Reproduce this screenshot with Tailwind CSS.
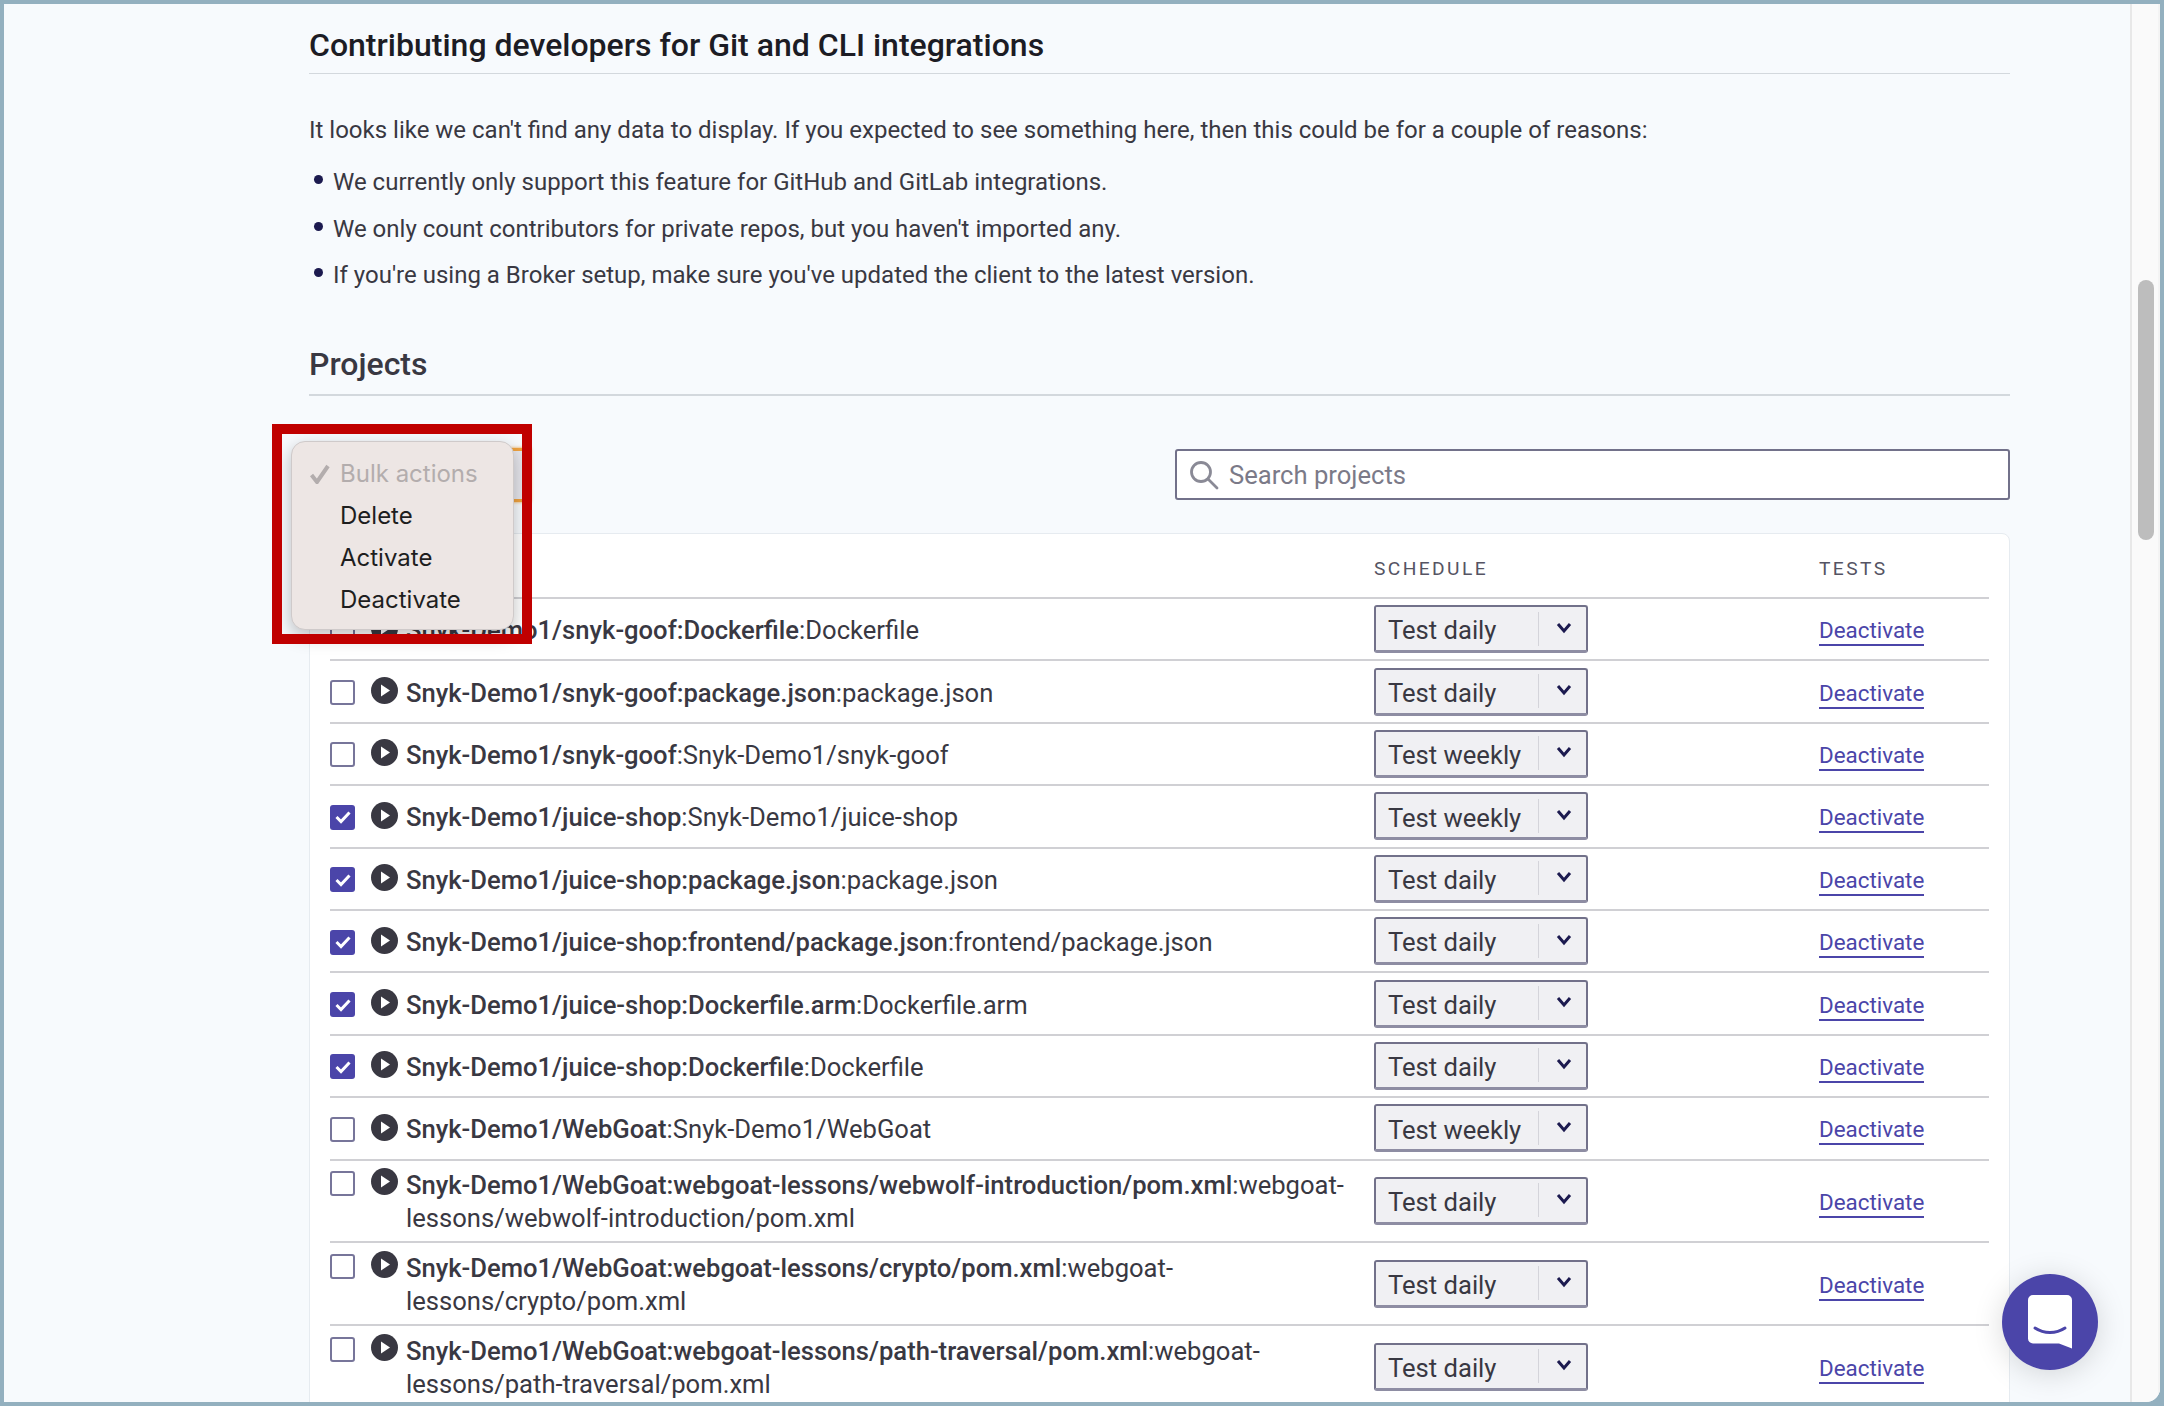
<!DOCTYPE html>
<html><head><meta charset="utf-8"><script src="https://cdn.jsdelivr.net/npm/@tailwindcss/browser@4"></script></head>
<body class="m-0 h-[1406px] w-[2164px] overflow-hidden bg-[#93b0bf] p-[4px] font-['Roboto',sans-serif] text-[25.6px] text-[#393842]">
<div class="flex h-[1398px] w-[2156px] overflow-hidden rounded-br-[14px] bg-[#f7fafd]">
<main class="relative h-full w-[2126px] shrink-0 overflow-hidden pl-[305px] pr-[120px]">
  <h2 class="border-b border-[#d3d8dd] pt-[24px] pb-[11px] text-[32px] leading-[34px] font-medium text-[#1c1c24]">Contributing developers for Git and CLI integrations</h2>
  <p class="mt-[40px] text-[24px] leading-[33px]">It looks like we can't find any data to display. If you expected to see something here, then this could be for a couple of reasons:</p>
  <ul class="mt-[19px] flex flex-col gap-[13.5px] text-[24px] leading-[33px]">
    <li class="flex"><span class="mt-[9px] ml-[5px] mr-[10px] h-[9px] w-[9px] rounded-full bg-[#1c1a4f]"></span>We currently only support this feature for GitHub and GitLab integrations.</li>
    <li class="flex"><span class="mt-[9px] ml-[5px] mr-[10px] h-[9px] w-[9px] rounded-full bg-[#1c1a4f]"></span>We only count contributors for private repos, but you haven't imported any.</li>
    <li class="flex"><span class="mt-[9px] ml-[5px] mr-[10px] h-[9px] w-[9px] rounded-full bg-[#1c1a4f]"></span>If you're using a Broker setup, make sure you've updated the client to the latest version.</li>
  </ul>
  <h2 class="mt-[55px] border-b-2 border-[#d3d8dd] pb-[13px] text-[32px] leading-[34px] font-medium text-[#393842]">Projects</h2>
  <div class="mt-[53px] flex h-[51px] items-center justify-between">
    <div class="h-[54px] w-[222px] border-y-[3px] border-[#f0a340] bg-[#e6e6ec] shadow-[0_0_3px_#f0a340]"></div>
    <div class="flex h-[51px] w-[835px] items-center gap-[10px] rounded-[3px] border-2 border-[#72718a] bg-white pl-[12px]">
      <svg class="h-[30px] w-[30px]" viewBox="0 0 30 30" fill="none" stroke="#8a8a96" stroke-width="2.800"><circle cx="12" cy="12" r="9.500"/><path d="M19 19l9 9" stroke-linecap="round"/></svg>
      <span class="pt-[2px] text-[#7b7a88]">Search projects</span>
    </div>
  </div>
  <section class="mt-[33px] rounded-t-[8px] border border-[#e6ebf0] bg-white pl-[20px] pr-[20px]">
    <div class="grid h-[65px] grid-cols-[41px_35px_968px_445px_170px] items-center border-b-2 border-[#d0d0d4] pt-[7px] text-[19.2px] tracking-[2.4px] text-[#555463]">
      <span></span><span></span><span></span><span>SCHEDULE</span><span>TESTS</span>
    </div>

    <div class="grid h-[62.4px] grid-cols-[41px_35px_968px_445px_170px] items-center border-b-2 border-[#d0d0d4]">
      <span class="h-[25px] w-[25px] translate-y-[1px] rounded-[3px] border-2 border-[#77759a] bg-white"></span>
      <svg class="h-[27px] w-[27px] -translate-y-[1px]" viewBox="0 0 27 27"><circle cx="13.500" cy="13.500" r="13.500" fill="#393842"/><path d="M10 7.500l9 6-9 6z" fill="#fff"/></svg>
      <span class="pr-[20px] pt-[3px] leading-[33px]"><b class="font-medium">Snyk-Demo1/snyk-goof:Dockerfile</b>:Dockerfile</span>
      <div class="flex h-[48px] w-[214px] items-center justify-between rounded-[3px] border-2 border-b-[3px] border-[#72718a] border-b-[#8e8da3] bg-[#f0f0f3]"><span class="pl-[12px] pt-[4px]">Test daily</span><span class="flex h-[34px] w-[48px] items-center justify-center border-l border-[#d4d4da] pb-[2px] pl-[2px]"><svg class="h-[12px] w-[16px]" viewBox="0 0 16 12" fill="none" stroke="#1c1a4f" stroke-width="3"><path d="M2 2l6 7 6-7"/></svg></span></div>
      <a class="mt-[5px] w-fit border-b-2 border-[#4b45a9] text-[22.4px] leading-[27px] text-[#4b45a9]">Deactivate</a>
    </div>

    <div class="grid h-[62.4px] grid-cols-[41px_35px_968px_445px_170px] items-center border-b-2 border-[#d0d0d4]">
      <span class="h-[25px] w-[25px] translate-y-[1px] rounded-[3px] border-2 border-[#77759a] bg-white"></span>
      <svg class="h-[27px] w-[27px] -translate-y-[1px]" viewBox="0 0 27 27"><circle cx="13.500" cy="13.500" r="13.500" fill="#393842"/><path d="M10 7.500l9 6-9 6z" fill="#fff"/></svg>
      <span class="pr-[20px] pt-[3px] leading-[33px]"><b class="font-medium">Snyk-Demo1/snyk-goof:package.json</b>:package.json</span>
      <div class="flex h-[48px] w-[214px] items-center justify-between rounded-[3px] border-2 border-b-[3px] border-[#72718a] border-b-[#8e8da3] bg-[#f0f0f3]"><span class="pl-[12px] pt-[4px]">Test daily</span><span class="flex h-[34px] w-[48px] items-center justify-center border-l border-[#d4d4da] pb-[2px] pl-[2px]"><svg class="h-[12px] w-[16px]" viewBox="0 0 16 12" fill="none" stroke="#1c1a4f" stroke-width="3"><path d="M2 2l6 7 6-7"/></svg></span></div>
      <a class="mt-[5px] w-fit border-b-2 border-[#4b45a9] text-[22.4px] leading-[27px] text-[#4b45a9]">Deactivate</a>
    </div>

    <div class="grid h-[62.4px] grid-cols-[41px_35px_968px_445px_170px] items-center border-b-2 border-[#d0d0d4]">
      <span class="h-[25px] w-[25px] translate-y-[1px] rounded-[3px] border-2 border-[#77759a] bg-white"></span>
      <svg class="h-[27px] w-[27px] -translate-y-[1px]" viewBox="0 0 27 27"><circle cx="13.500" cy="13.500" r="13.500" fill="#393842"/><path d="M10 7.500l9 6-9 6z" fill="#fff"/></svg>
      <span class="pr-[20px] pt-[3px] leading-[33px]"><b class="font-medium">Snyk-Demo1/snyk-goof</b>:Snyk-Demo1/snyk-goof</span>
      <div class="flex h-[48px] w-[214px] items-center justify-between rounded-[3px] border-2 border-b-[3px] border-[#72718a] border-b-[#8e8da3] bg-[#f0f0f3]"><span class="pl-[12px] pt-[4px]">Test weekly</span><span class="flex h-[34px] w-[48px] items-center justify-center border-l border-[#d4d4da] pb-[2px] pl-[2px]"><svg class="h-[12px] w-[16px]" viewBox="0 0 16 12" fill="none" stroke="#1c1a4f" stroke-width="3"><path d="M2 2l6 7 6-7"/></svg></span></div>
      <a class="mt-[5px] w-fit border-b-2 border-[#4b45a9] text-[22.4px] leading-[27px] text-[#4b45a9]">Deactivate</a>
    </div>

    <div class="grid h-[62.4px] grid-cols-[41px_35px_968px_445px_170px] items-center border-b-2 border-[#d0d0d4]">
      <span class="flex h-[25px] w-[25px] translate-y-[1px] items-center justify-center rounded-[3px] bg-[#4b45a9]"><svg class="h-[14px] w-[16px]" viewBox="0 0 16 14" fill="none" stroke="#fff" stroke-width="3"><path d="M1.500 7l4.500 4.500 8.500-9"/></svg></span>
      <svg class="h-[27px] w-[27px] -translate-y-[1px]" viewBox="0 0 27 27"><circle cx="13.500" cy="13.500" r="13.500" fill="#393842"/><path d="M10 7.500l9 6-9 6z" fill="#fff"/></svg>
      <span class="pr-[20px] pt-[3px] leading-[33px]"><b class="font-medium">Snyk-Demo1/juice-shop</b>:Snyk-Demo1/juice-shop</span>
      <div class="flex h-[48px] w-[214px] items-center justify-between rounded-[3px] border-2 border-b-[3px] border-[#72718a] border-b-[#8e8da3] bg-[#f0f0f3]"><span class="pl-[12px] pt-[4px]">Test weekly</span><span class="flex h-[34px] w-[48px] items-center justify-center border-l border-[#d4d4da] pb-[2px] pl-[2px]"><svg class="h-[12px] w-[16px]" viewBox="0 0 16 12" fill="none" stroke="#1c1a4f" stroke-width="3"><path d="M2 2l6 7 6-7"/></svg></span></div>
      <a class="mt-[5px] w-fit border-b-2 border-[#4b45a9] text-[22.4px] leading-[27px] text-[#4b45a9]">Deactivate</a>
    </div>

    <div class="grid h-[62.4px] grid-cols-[41px_35px_968px_445px_170px] items-center border-b-2 border-[#d0d0d4]">
      <span class="flex h-[25px] w-[25px] translate-y-[1px] items-center justify-center rounded-[3px] bg-[#4b45a9]"><svg class="h-[14px] w-[16px]" viewBox="0 0 16 14" fill="none" stroke="#fff" stroke-width="3"><path d="M1.500 7l4.500 4.500 8.500-9"/></svg></span>
      <svg class="h-[27px] w-[27px] -translate-y-[1px]" viewBox="0 0 27 27"><circle cx="13.500" cy="13.500" r="13.500" fill="#393842"/><path d="M10 7.500l9 6-9 6z" fill="#fff"/></svg>
      <span class="pr-[20px] pt-[3px] leading-[33px]"><b class="font-medium">Snyk-Demo1/juice-shop:package.json</b>:package.json</span>
      <div class="flex h-[48px] w-[214px] items-center justify-between rounded-[3px] border-2 border-b-[3px] border-[#72718a] border-b-[#8e8da3] bg-[#f0f0f3]"><span class="pl-[12px] pt-[4px]">Test daily</span><span class="flex h-[34px] w-[48px] items-center justify-center border-l border-[#d4d4da] pb-[2px] pl-[2px]"><svg class="h-[12px] w-[16px]" viewBox="0 0 16 12" fill="none" stroke="#1c1a4f" stroke-width="3"><path d="M2 2l6 7 6-7"/></svg></span></div>
      <a class="mt-[5px] w-fit border-b-2 border-[#4b45a9] text-[22.4px] leading-[27px] text-[#4b45a9]">Deactivate</a>
    </div>

    <div class="grid h-[62.4px] grid-cols-[41px_35px_968px_445px_170px] items-center border-b-2 border-[#d0d0d4]">
      <span class="flex h-[25px] w-[25px] translate-y-[1px] items-center justify-center rounded-[3px] bg-[#4b45a9]"><svg class="h-[14px] w-[16px]" viewBox="0 0 16 14" fill="none" stroke="#fff" stroke-width="3"><path d="M1.500 7l4.500 4.500 8.500-9"/></svg></span>
      <svg class="h-[27px] w-[27px] -translate-y-[1px]" viewBox="0 0 27 27"><circle cx="13.500" cy="13.500" r="13.500" fill="#393842"/><path d="M10 7.500l9 6-9 6z" fill="#fff"/></svg>
      <span class="pr-[20px] pt-[3px] leading-[33px]"><b class="font-medium">Snyk-Demo1/juice-shop:frontend/package.json</b>:frontend/package.json</span>
      <div class="flex h-[48px] w-[214px] items-center justify-between rounded-[3px] border-2 border-b-[3px] border-[#72718a] border-b-[#8e8da3] bg-[#f0f0f3]"><span class="pl-[12px] pt-[4px]">Test daily</span><span class="flex h-[34px] w-[48px] items-center justify-center border-l border-[#d4d4da] pb-[2px] pl-[2px]"><svg class="h-[12px] w-[16px]" viewBox="0 0 16 12" fill="none" stroke="#1c1a4f" stroke-width="3"><path d="M2 2l6 7 6-7"/></svg></span></div>
      <a class="mt-[5px] w-fit border-b-2 border-[#4b45a9] text-[22.4px] leading-[27px] text-[#4b45a9]">Deactivate</a>
    </div>

    <div class="grid h-[62.4px] grid-cols-[41px_35px_968px_445px_170px] items-center border-b-2 border-[#d0d0d4]">
      <span class="flex h-[25px] w-[25px] translate-y-[1px] items-center justify-center rounded-[3px] bg-[#4b45a9]"><svg class="h-[14px] w-[16px]" viewBox="0 0 16 14" fill="none" stroke="#fff" stroke-width="3"><path d="M1.500 7l4.500 4.500 8.500-9"/></svg></span>
      <svg class="h-[27px] w-[27px] -translate-y-[1px]" viewBox="0 0 27 27"><circle cx="13.500" cy="13.500" r="13.500" fill="#393842"/><path d="M10 7.500l9 6-9 6z" fill="#fff"/></svg>
      <span class="pr-[20px] pt-[3px] leading-[33px]"><b class="font-medium">Snyk-Demo1/juice-shop:Dockerfile.arm</b>:Dockerfile.arm</span>
      <div class="flex h-[48px] w-[214px] items-center justify-between rounded-[3px] border-2 border-b-[3px] border-[#72718a] border-b-[#8e8da3] bg-[#f0f0f3]"><span class="pl-[12px] pt-[4px]">Test daily</span><span class="flex h-[34px] w-[48px] items-center justify-center border-l border-[#d4d4da] pb-[2px] pl-[2px]"><svg class="h-[12px] w-[16px]" viewBox="0 0 16 12" fill="none" stroke="#1c1a4f" stroke-width="3"><path d="M2 2l6 7 6-7"/></svg></span></div>
      <a class="mt-[5px] w-fit border-b-2 border-[#4b45a9] text-[22.4px] leading-[27px] text-[#4b45a9]">Deactivate</a>
    </div>

    <div class="grid h-[62.4px] grid-cols-[41px_35px_968px_445px_170px] items-center border-b-2 border-[#d0d0d4]">
      <span class="flex h-[25px] w-[25px] translate-y-[1px] items-center justify-center rounded-[3px] bg-[#4b45a9]"><svg class="h-[14px] w-[16px]" viewBox="0 0 16 14" fill="none" stroke="#fff" stroke-width="3"><path d="M1.500 7l4.500 4.500 8.500-9"/></svg></span>
      <svg class="h-[27px] w-[27px] -translate-y-[1px]" viewBox="0 0 27 27"><circle cx="13.500" cy="13.500" r="13.500" fill="#393842"/><path d="M10 7.500l9 6-9 6z" fill="#fff"/></svg>
      <span class="pr-[20px] pt-[3px] leading-[33px]"><b class="font-medium">Snyk-Demo1/juice-shop:Dockerfile</b>:Dockerfile</span>
      <div class="flex h-[48px] w-[214px] items-center justify-between rounded-[3px] border-2 border-b-[3px] border-[#72718a] border-b-[#8e8da3] bg-[#f0f0f3]"><span class="pl-[12px] pt-[4px]">Test daily</span><span class="flex h-[34px] w-[48px] items-center justify-center border-l border-[#d4d4da] pb-[2px] pl-[2px]"><svg class="h-[12px] w-[16px]" viewBox="0 0 16 12" fill="none" stroke="#1c1a4f" stroke-width="3"><path d="M2 2l6 7 6-7"/></svg></span></div>
      <a class="mt-[5px] w-fit border-b-2 border-[#4b45a9] text-[22.4px] leading-[27px] text-[#4b45a9]">Deactivate</a>
    </div>

    <div class="grid h-[62.4px] grid-cols-[41px_35px_968px_445px_170px] items-center border-b-2 border-[#d0d0d4]">
      <span class="h-[25px] w-[25px] translate-y-[1px] rounded-[3px] border-2 border-[#77759a] bg-white"></span>
      <svg class="h-[27px] w-[27px] -translate-y-[1px]" viewBox="0 0 27 27"><circle cx="13.500" cy="13.500" r="13.500" fill="#393842"/><path d="M10 7.500l9 6-9 6z" fill="#fff"/></svg>
      <span class="pr-[20px] pt-[3px] leading-[33px]"><b class="font-medium">Snyk-Demo1/WebGoat</b>:Snyk-Demo1/WebGoat</span>
      <div class="flex h-[48px] w-[214px] items-center justify-between rounded-[3px] border-2 border-b-[3px] border-[#72718a] border-b-[#8e8da3] bg-[#f0f0f3]"><span class="pl-[12px] pt-[4px]">Test weekly</span><span class="flex h-[34px] w-[48px] items-center justify-center border-l border-[#d4d4da] pb-[2px] pl-[2px]"><svg class="h-[12px] w-[16px]" viewBox="0 0 16 12" fill="none" stroke="#1c1a4f" stroke-width="3"><path d="M2 2l6 7 6-7"/></svg></span></div>
      <a class="mt-[5px] w-fit border-b-2 border-[#4b45a9] text-[22.4px] leading-[27px] text-[#4b45a9]">Deactivate</a>
    </div>

    <div class="grid h-[82.8px] grid-cols-[41px_35px_968px_445px_170px] items-center border-b-2 border-[#d0d0d4]">
      <span class="-mt-[34px] h-[25px] w-[25px] rounded-[3px] border-2 border-[#77759a] bg-white"></span>
      <svg class="-mt-[38px] h-[27px] w-[27px]" viewBox="0 0 27 27"><circle cx="13.500" cy="13.500" r="13.500" fill="#393842"/><path d="M10 7.500l9 6-9 6z" fill="#fff"/></svg>
      <span class="pr-[20px] pt-[2px] leading-[33px]"><b class="font-medium">Snyk-Demo1/WebGoat:webgoat-lessons/webwolf-introduction/pom.xml</b>:webgoat-lessons/webwolf-introduction/pom.xml</span>
      <div class="flex h-[48px] w-[214px] items-center justify-between rounded-[3px] border-2 border-b-[3px] border-[#72718a] border-b-[#8e8da3] bg-[#f0f0f3]"><span class="pl-[12px] pt-[4px]">Test daily</span><span class="flex h-[34px] w-[48px] items-center justify-center border-l border-[#d4d4da] pb-[2px] pl-[2px]"><svg class="h-[12px] w-[16px]" viewBox="0 0 16 12" fill="none" stroke="#1c1a4f" stroke-width="3"><path d="M2 2l6 7 6-7"/></svg></span></div>
      <a class="mt-[5px] w-fit border-b-2 border-[#4b45a9] text-[22.4px] leading-[27px] text-[#4b45a9]">Deactivate</a>
    </div>

    <div class="grid h-[82.8px] grid-cols-[41px_35px_968px_445px_170px] items-center border-b-2 border-[#d0d0d4]">
      <span class="-mt-[34px] h-[25px] w-[25px] rounded-[3px] border-2 border-[#77759a] bg-white"></span>
      <svg class="-mt-[38px] h-[27px] w-[27px]" viewBox="0 0 27 27"><circle cx="13.500" cy="13.500" r="13.500" fill="#393842"/><path d="M10 7.500l9 6-9 6z" fill="#fff"/></svg>
      <span class="pr-[20px] pt-[2px] leading-[33px]"><b class="font-medium">Snyk-Demo1/WebGoat:webgoat-lessons/crypto/pom.xml</b>:webgoat-lessons/crypto/pom.xml</span>
      <div class="flex h-[48px] w-[214px] items-center justify-between rounded-[3px] border-2 border-b-[3px] border-[#72718a] border-b-[#8e8da3] bg-[#f0f0f3]"><span class="pl-[12px] pt-[4px]">Test daily</span><span class="flex h-[34px] w-[48px] items-center justify-center border-l border-[#d4d4da] pb-[2px] pl-[2px]"><svg class="h-[12px] w-[16px]" viewBox="0 0 16 12" fill="none" stroke="#1c1a4f" stroke-width="3"><path d="M2 2l6 7 6-7"/></svg></span></div>
      <a class="mt-[5px] w-fit border-b-2 border-[#4b45a9] text-[22.4px] leading-[27px] text-[#4b45a9]">Deactivate</a>
    </div>

    <div class="grid h-[82.8px] grid-cols-[41px_35px_968px_445px_170px] items-center border-b-2 border-[#d0d0d4]">
      <span class="-mt-[34px] h-[25px] w-[25px] rounded-[3px] border-2 border-[#77759a] bg-white"></span>
      <svg class="-mt-[38px] h-[27px] w-[27px]" viewBox="0 0 27 27"><circle cx="13.500" cy="13.500" r="13.500" fill="#393842"/><path d="M10 7.500l9 6-9 6z" fill="#fff"/></svg>
      <span class="pr-[20px] pt-[2px] leading-[33px]"><b class="font-medium">Snyk-Demo1/WebGoat:webgoat-lessons/path-traversal/pom.xml</b>:webgoat-lessons/path-traversal/pom.xml</span>
      <div class="flex h-[48px] w-[214px] items-center justify-between rounded-[3px] border-2 border-b-[3px] border-[#72718a] border-b-[#8e8da3] bg-[#f0f0f3]"><span class="pl-[12px] pt-[4px]">Test daily</span><span class="flex h-[34px] w-[48px] items-center justify-center border-l border-[#d4d4da] pb-[2px] pl-[2px]"><svg class="h-[12px] w-[16px]" viewBox="0 0 16 12" fill="none" stroke="#1c1a4f" stroke-width="3"><path d="M2 2l6 7 6-7"/></svg></span></div>
      <a class="mt-[5px] w-fit border-b-2 border-[#4b45a9] text-[22.4px] leading-[27px] text-[#4b45a9]">Deactivate</a>
    </div>
  </section>

  <div class="absolute left-[287px] top-[437px] flex h-[189px] w-[223px] flex-col rounded-[14px] border border-[#cfcaca] bg-[#ede6e4] pt-[11px] font-['Inter',sans-serif] text-[24px] leading-[42px] text-[#1e1e1e] shadow-[0_6px_18px_rgba(0,0,0,0.25)]">
    <div class="flex items-center text-[#b3adad]"><svg class="ml-[18px] mr-[9px] h-[20px] w-[21px]" viewBox="0 0 21 20" fill="none" stroke="#b3adad" stroke-width="4"><path d="M1.500 11l5.500 7 11-16"/></svg>Bulk actions</div>
    <div class="pl-[48px]">Delete</div>
    <div class="pl-[48px]">Activate</div>
    <div class="pl-[48px]">Deactivate</div>
  </div>
  <div class="pointer-events-none absolute left-[268px] top-[420px] h-[220px] w-[260px] border-[10px] border-[#c00000]"></div>

  <div class="absolute left-[1998px] top-[1270px] flex h-[96px] w-[96px] items-center justify-center rounded-full bg-[#4b45a9] shadow-[0_4px_30px_rgba(0,0,0,0.15)]">
    <svg class="h-[54px] w-[44px]" viewBox="0 0 44 54"><path d="M5 0h34a5 5 0 0 1 5 5v48.500l-13-5H5a5 5 0 0 1-5-5V5a5 5 0 0 1 5-5z" fill="#fff"/><path d="M7 33c9 6 21 6 30 0" fill="none" stroke="#4b45a9" stroke-width="3" stroke-linecap="round"/></svg>
  </div>
</main>
<aside class="relative h-full w-[30px] shrink-0 border-x-2 border-l-[#e8e8e8] border-r-[#f4f4f4] bg-[#fafafa]">
  <div class="absolute left-[6px] top-[276px] h-[260px] w-[16px] rounded-full bg-[#bdbdbd]"></div>
</aside>
</div>
</body></html>
